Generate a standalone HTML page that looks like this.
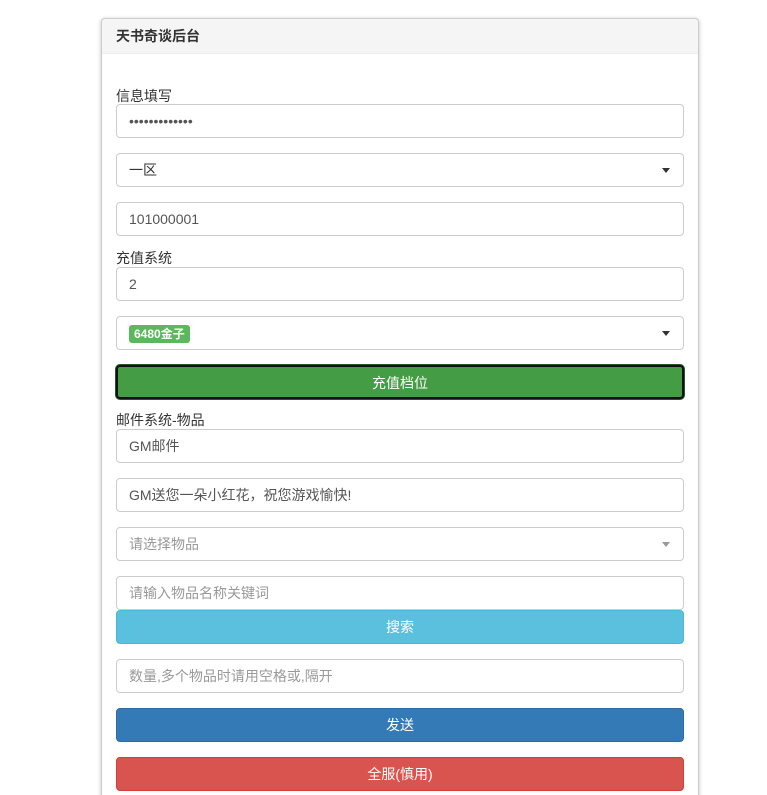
<!DOCTYPE html>
<html style="overflow:hidden;height:795px"><head><meta charset="utf-8"><style>
body{margin:0;width:767px;height:795px;background:#fff;font-family:"Liberation Sans","Noto Sans CJK SC",sans-serif;font-size:14px;color:#333;overflow:hidden;position:relative}
.panel{position:absolute;left:101px;top:18px;width:596px;height:785px;border:1px solid #ccc;border-radius:4px;box-shadow:0 1px 4px rgba(0,0,0,.25);background:#fff}
.hd{height:34px;background:#f5f5f5;border-bottom:1px solid #eee;border-radius:4px 4px 0 0;font-weight:bold;line-height:34px;padding-left:14px;font-size:14px}
.i{position:absolute;left:116px;height:32px;border:1px solid #ccc;border-radius:4px;line-height:32px;padding-left:12px;box-sizing:content-box;width:554px;background:#fff}
.ph{color:#999}
.l{position:absolute;left:116px;font-size:14px;line-height:16px}
.c{position:absolute;right:13px;top:14px;width:0;height:0;border-left:4px solid transparent;border-right:4px solid transparent;border-top:5px solid #333}
.b{position:absolute;left:116px;width:568px;height:34px;border-radius:4px;color:#fff;text-align:center;line-height:32px;box-sizing:border-box}
.badge{display:inline-block;background:#5cb85c;color:#fff;font-weight:bold;font-size:12px;line-height:18px;padding:0 5px;border-radius:3px;vertical-align:middle}
</style></head><body>
<div class="panel"><div class="hd">天书奇谈后台</div></div>
<div class="l" style="top:88px">信息填写</div>
<div class="i" style="top:104px;color:#555">•••••••••••••</div>
<div class="i" style="top:153px">一区<span class="c"></span></div>
<div class="i" style="top:202px;color:#555">101000001</div>
<div class="l" style="top:250px">充值系统</div>
<div class="i" style="top:267px;color:#555">2</div>
<div class="i" style="top:316px"><span class="badge">6480金子</span><span class="c"></span></div>
<div class="b" style="top:365px;background:#449d44;border:2px solid #111;box-shadow:0 0 0 1px #255625">充值档位</div>
<div class="l" style="top:412px">邮件系统-物品</div>
<div class="i" style="top:429px;color:#555">GM邮件</div>
<div class="i" style="top:478px;color:#555">GM送您一朵小红花，祝您游戏愉快!</div>
<div class="i ph" style="top:527px">请选择物品<span class="c" style="border-top-color:#999"></span></div>
<div class="i ph" style="top:576px">请输入物品名称关键词</div>
<div class="b" style="top:610px;background:#5bc0de;border:1px solid #46b8da">搜索</div>
<div class="i ph" style="top:659px">数量,多个物品时请用空格或,隔开</div>
<div class="b" style="top:708px;background:#337ab7;border:1px solid #2e6da4">发送</div>
<div class="b" style="top:757px;background:#d9534f;border:1px solid #d43f3a">全服(慎用)</div>
</body></html>
